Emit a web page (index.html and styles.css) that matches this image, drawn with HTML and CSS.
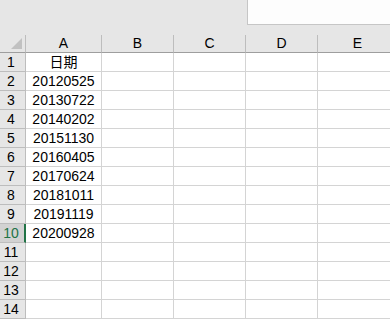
FILE: index.html
```html
<!DOCTYPE html>
<html>
<head>
<meta charset="utf-8">
<link rel="stylesheet" href="styles.css">
</head>
<body>
<div class="top">
  <div class="namebox"></div>
</div>
<div class="sheet">
  <div class="row head">
    <div class="rh corner"><span class="tri"></span></div>
    <div class="ch a">A</div>
    <div class="ch">B</div>
    <div class="ch">C</div>
    <div class="ch">D</div>
    <div class="ch e">E</div>
  </div>
  <div class="row"><div class="rh">1</div><div class="c a">日期</div><div class="c"></div><div class="c"></div><div class="c"></div><div class="c e"></div></div>
  <div class="row"><div class="rh">2</div><div class="c a">20120525</div><div class="c"></div><div class="c"></div><div class="c"></div><div class="c e"></div></div>
  <div class="row"><div class="rh">3</div><div class="c a">20130722</div><div class="c"></div><div class="c"></div><div class="c"></div><div class="c e"></div></div>
  <div class="row"><div class="rh">4</div><div class="c a">20140202</div><div class="c"></div><div class="c"></div><div class="c"></div><div class="c e"></div></div>
  <div class="row"><div class="rh">5</div><div class="c a">20151130</div><div class="c"></div><div class="c"></div><div class="c"></div><div class="c e"></div></div>
  <div class="row"><div class="rh">6</div><div class="c a">20160405</div><div class="c"></div><div class="c"></div><div class="c"></div><div class="c e"></div></div>
  <div class="row"><div class="rh">7</div><div class="c a">20170624</div><div class="c"></div><div class="c"></div><div class="c"></div><div class="c e"></div></div>
  <div class="row"><div class="rh">8</div><div class="c a">20181011</div><div class="c"></div><div class="c"></div><div class="c"></div><div class="c e"></div></div>
  <div class="row"><div class="rh">9</div><div class="c a">20191119</div><div class="c"></div><div class="c"></div><div class="c"></div><div class="c e"></div></div>
  <div class="row"><div class="rh sel">10</div><div class="c a">20200928</div><div class="c"></div><div class="c"></div><div class="c"></div><div class="c e"></div></div>
  <div class="row"><div class="rh">11</div><div class="c a"></div><div class="c"></div><div class="c"></div><div class="c"></div><div class="c e"></div></div>
  <div class="row"><div class="rh">12</div><div class="c a"></div><div class="c"></div><div class="c"></div><div class="c"></div><div class="c e"></div></div>
  <div class="row"><div class="rh">13</div><div class="c a"></div><div class="c"></div><div class="c"></div><div class="c"></div><div class="c e"></div></div>
  <div class="row"><div class="rh">14</div><div class="c a"></div><div class="c"></div><div class="c"></div><div class="c"></div><div class="c e"></div></div>
</div>
</body>
</html>
```
FILE: styles.css
```css
html, body {
  margin: 0;
  padding: 0;
  background: #e6e6e6;
  overflow: hidden;
  font-family: "Liberation Sans", "Noto Sans CJK SC", sans-serif;
  font-size: 14px;
  color: #000;
}
.top {
  height: 35px;
  display: flex;
  justify-content: flex-end;
}
.namebox {
  width: 142px;
  height: 24px;
  background: #fdfdfd;
  border-left: 1px solid #c6c6c6;
  border-bottom: 1px solid #c6c6c6;
}
.sheet {
  background: #fff;
}
.row {
  display: flex;
  height: 19px;
}
.rh {
  box-sizing: border-box;
  width: 26px;
  flex: none;
  background: #e6e6e6;
  border-right: 1px solid #bdbdbd;
  border-bottom: 1px solid #bdbdbd;
  display: flex;
  align-items: center;
  justify-content: center;
  padding-right: 3px;
  line-height: 18px;
}
.rh.sel {
  background: #d2d2d2;
  color: #217346;
  border-right: 2px solid #217346;
  padding-right: 2px;
}
.head {
  height: 18px;
}
.head .rh, .ch {
  border-bottom: 1px solid #9e9e9e;
}
.corner {
  position: relative;
}
.tri {
  position: absolute;
  right: 3px;
  bottom: 3px;
  width: 0;
  height: 0;
  border-left: 11px solid transparent;
  border-bottom: 11px solid #c1c1c1;
}
.ch {
  box-sizing: border-box;
  width: 72px;
  flex: none;
  background: #e6e6e6;
  border-right: 1px solid #bdbdbd;
  display: flex;
  align-items: center;
  justify-content: center;
  line-height: 17px;
}
.c {
  box-sizing: border-box;
  width: 72px;
  flex: none;
  border-right: 1px solid #d4d4d4;
  border-bottom: 1px solid #d4d4d4;
  text-align: center;
  line-height: 18px;
}
.a {
  width: 76px;
}
.e {
  width: 80px;
}
```
